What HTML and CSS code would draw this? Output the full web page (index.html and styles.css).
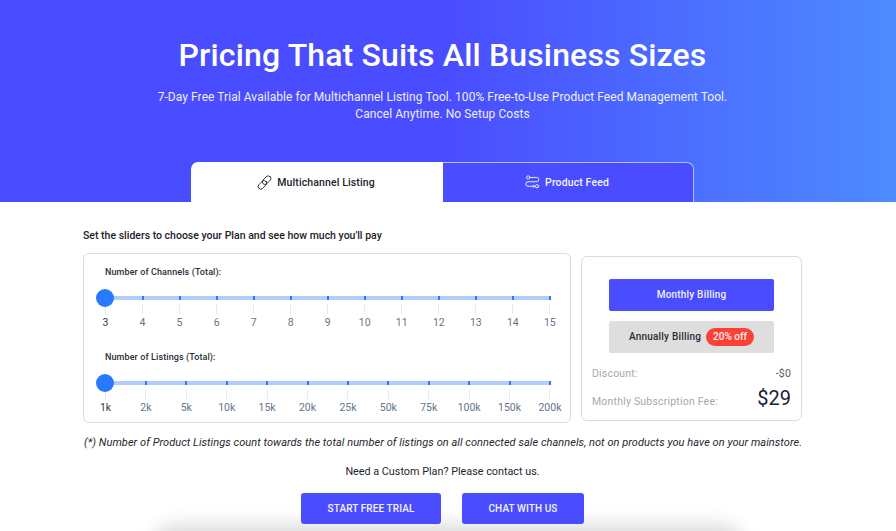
FILE: index.html
```html
<!DOCTYPE html>
<html lang="en">
<head>
    <meta charset="UTF-8">
    <title>Pricing</title>
    <link rel="stylesheet" href="styles.css">
</head>
<body>

    <header class="hero">
        <h1>Pricing That Suits All Business Sizes</h1>
        <p>7-Day Free Trial Available for Multichannel Listing Tool. 100% Free-to-Use Product Feed Management Tool.<br>Cancel Anytime. No Setup Costs</p>

        <div class="tabs">
            <div class="tab tab-active">
                <svg class="tab-icon" viewBox="0 0 16 16" fill="none" stroke="currentColor" stroke-width="0.9" stroke-linecap="round">
                    <rect x="7.4" y="0.2" width="5.6" height="10.6" rx="2.8" transform="rotate(45 10.2 5.5)"/>
                    <rect x="3" y="5.2" width="5.6" height="10.6" rx="2.8" transform="rotate(45 5.8 10.5)"/>
                </svg>
                Multichannel Listing
            </div>
            <div class="tab tab-feed">
                <svg class="tab-icon" viewBox="0 0 16 16" fill="none" stroke="currentColor" stroke-width="1" stroke-linecap="round" stroke-linejoin="round">
                    <circle cx="3.4" cy="2.6" r="1.7"/>
                    <path d="M5.1 2.6h7.3a2.3 2.3 0 0 1 0 4.6H3.2a2.4 2.4 0 0 0 0 4.8h7"/>
                    <path d="M8.8 10.6l1.4 1.4l-1.4 1.4"/>
                    <circle cx="12.8" cy="12" r="1.7"/>
                </svg>
                Product Feed
            </div>
        </div>
    </header>

    <main class="content">
        <h2 class="intro">Set the sliders to choose your Plan and see how much you'll pay</h2>

        <div class="plan-row">
            <section class="card sliders">
                <div class="slider-label">Number of Channels (Total):</div>
                <div class="slider">
                    <div class="track"></div>
                    <div class="thumb"></div>
                    <div class="stops">
                        <div class="stop stop-on"><i></i><b></b><span>3</span></div>
                        <div class="stop"><i></i><b></b><span>4</span></div>
                        <div class="stop"><i></i><b></b><span>5</span></div>
                        <div class="stop"><i></i><b></b><span>6</span></div>
                        <div class="stop"><i></i><b></b><span>7</span></div>
                        <div class="stop"><i></i><b></b><span>8</span></div>
                        <div class="stop"><i></i><b></b><span>9</span></div>
                        <div class="stop"><i></i><b></b><span>10</span></div>
                        <div class="stop"><i></i><b></b><span>11</span></div>
                        <div class="stop"><i></i><b></b><span>12</span></div>
                        <div class="stop"><i></i><b></b><span>13</span></div>
                        <div class="stop"><i></i><b></b><span>14</span></div>
                        <div class="stop"><i></i><b></b><span>15</span></div>
                    </div>
                </div>

                <div class="slider-label label-second">Number of Listings (Total):</div>
                <div class="slider">
                    <div class="track"></div>
                    <div class="thumb"></div>
                    <div class="stops">
                        <div class="stop stop-on"><i></i><b></b><span>1k</span></div>
                        <div class="stop"><i></i><b></b><span>2k</span></div>
                        <div class="stop"><i></i><b></b><span>5k</span></div>
                        <div class="stop"><i></i><b></b><span>10k</span></div>
                        <div class="stop"><i></i><b></b><span>15k</span></div>
                        <div class="stop"><i></i><b></b><span>20k</span></div>
                        <div class="stop"><i></i><b></b><span>25k</span></div>
                        <div class="stop"><i></i><b></b><span>50k</span></div>
                        <div class="stop"><i></i><b></b><span>75k</span></div>
                        <div class="stop"><i></i><b></b><span>100k</span></div>
                        <div class="stop"><i></i><b></b><span>150k</span></div>
                        <div class="stop"><i></i><b></b><span>200k</span></div>
                    </div>
                </div>
            </section>

            <aside class="card billing">
                <div class="bill-btn bill-monthly">Monthly Billing</div>
                <div class="bill-btn bill-annual">Annually Billing <span class="off">20% off</span></div>
                <div class="fee-row discount"><span>Discount:</span><span>-$0</span></div>
                <div class="fee-row total"><span>Monthly Subscription Fee:</span><strong>$29</strong></div>
            </aside>
        </div>

        <p class="note">(*) Number of Product Listings count towards the total number of listings on all connected sale channels, not on products you have on your mainstore.</p>
        <p class="custom">Need a Custom Plan? Please contact us.</p>

        <div class="actions">
            <a class="action action-trial">START FREE TRIAL</a>
            <a class="action action-chat">CHAT WITH US</a>
        </div>
    </main>

    <div class="bottom-shadow"></div>

</body>
</html>
```

FILE: styles.css
```css
/* Global */
html, body {
    height: 531px;
    overflow: hidden;
}

body {
    font-family: 'Roboto', sans-serif;
    background-color: #ffffff;
    margin: 0;
    padding: 0;
    color: #1d1d2b;
    position: relative;
}

/* Hero */
.hero {
    height: 202px;
    box-sizing: border-box;
    padding: 36px 11px 0 0;
    background: linear-gradient(90deg, #4a4dff 0%, #4a4dff 50%, #4d8bff 100%);
    color: #ffffff;
    text-align: center;
    display: flex;
    flex-direction: column;
    align-items: center;
}

.hero h1 {
    margin: 0;
    font-size: 32px;
    line-height: 38px;
    font-weight: 500;
    letter-spacing: 0.15px;
}

.hero p {
    margin: 15px 0 0;
    font-size: 12px;
    line-height: 17px;
    letter-spacing: 0.06px;
    color: #eef0ff;
}

/* Tabs */
.tabs {
    display: flex;
    margin-top: auto;
    width: 503px;
}

.tab {
    height: 40px;
    padding-right: 2px;
    display: flex;
    align-items: center;
    justify-content: center;
    gap: 5px;
    font-size: 10.5px;
    font-weight: 500;
    letter-spacing: 0.12px;
    box-sizing: border-box;
}

.tab-active {
    width: 252px;
    background-color: #ffffff;
    color: #1d1d2b;
    border-radius: 7px 0 0 0;
}

.tab-feed {
    width: 251px;
    background-color: #4a4dff;
    color: #f2f3ff;
    border: 1px solid #b9bcff;
    border-bottom: none;
    border-left: none;
    border-radius: 0 7px 0 0;
}

.tab-icon {
    width: 15px;
    height: 15px;
}

/* Content */
.content {
    width: 719px;
    margin: 0 0 0 83px;
}

.intro {
    margin: 27px 0 0;
    font-size: 10.5px;
    line-height: 13px;
    font-weight: 500;
    color: #1d1d2b;
}

.plan-row {
    display: flex;
    align-items: center;
    gap: 10px;
    margin-top: 11px;
}

.card {
    background-color: #ffffff;
    border: 1px solid #dcdcdc;
    border-radius: 6px;
    box-sizing: border-box;
}

/* Sliders */
.sliders {
    width: 488px;
    height: 170px;
    padding: 13px 10px 0 12px;
}

.slider-label {
    margin-left: 9px;
    font-size: 9px;
    line-height: 11px;
    font-weight: 500;
    letter-spacing: 0.1px;
    color: #2b2f3a;
}

.label-second {
    margin-top: 19px;
}

.slider {
    position: relative;
    margin: 11px 10px 0 9.5px;
    height: 44px;
}

.track {
    height: 4px;
    position: absolute;
    left: 0;
    right: 0;
    top: 7px;
    background-color: #b3cdfb;
}

.thumb {
    position: absolute;
    left: -9.5px;
    top: 0;
    width: 18px;
    height: 18px;
    border-radius: 50%;
    background-color: #2979ff;
    z-index: 1;
}

.stops {
    position: relative;
    display: flex;
    justify-content: space-between;
}

.stop {
    width: 0;
    display: flex;
    flex-direction: column;
    align-items: center;
    padding-top: 7px;
}

.stop i {
    flex: none;
    width: 2px;
    height: 4px;
    background-color: #2979ff;
}

.stop b {
    flex: none;
    width: 1px;
    height: 9px;
    margin-top: 5px;
    background-color: #e6e8ec;
}

.stop span {
    flex: none;
    margin-top: 1.5px;
    font-size: 10.5px;
    line-height: 13px;
    color: #64748b;
    white-space: nowrap;
}

.stop-on span {
    color: #333a47;
}

/* Billing */
.billing {
    width: 221px;
    height: 165px;
    padding: 22px 10px 0 10px;
}

.bill-btn {
    width: 165px;
    height: 32px;
    margin: 0 0 0 17px;
    border-radius: 2px;
    display: flex;
    align-items: center;
    justify-content: center;
    font-size: 10px;
    font-weight: 500;
    letter-spacing: 0.2px;
}

.bill-monthly {
    background-color: #4a4dff;
    color: #f0f1ff;
}

.bill-annual {
    background-color: #dedede;
    color: #2b2b33;
    margin-top: 10px;
    gap: 5px;
}

.off {
    background-color: #fb4237;
    color: #ffeeee;
    border-radius: 9px;
    padding: 0 7px;
    height: 18px;
    line-height: 18px;
    letter-spacing: 0;
}

.fee-row {
    display: flex;
    justify-content: space-between;
    font-size: 10.5px;
    letter-spacing: 0.2px;
    color: #a6a9b0;
}

.discount {
    margin-top: 15px;
    height: 12px;
    line-height: 12px;
}

.discount span:last-child {
    color: #555a66;
}

.total {
    margin-top: 6px;
    height: 25px;
    align-items: flex-end;
}

.total span {
    margin-bottom: 3px;
}

.total strong {
    font-size: 20px;
    line-height: 25px;
    font-weight: 400;
    letter-spacing: 0;
    color: #1a2238;
}

/* Footer part */
.note {
    margin: 13px 0 0 1px;
    font-size: 11px;
    line-height: 14px;
    font-style: italic;
    letter-spacing: 0.05px;
    color: #26262e;
    white-space: nowrap;
}

.custom {
    margin: 15px 0 0;
    font-size: 10.8px;
    line-height: 14px;
    text-align: center;
    color: #26262e;
}

.actions {
    display: flex;
    justify-content: center;
    gap: 21px;
    margin-top: 14px;
    position: relative;
    z-index: 1;
}

.action {
    height: 31px;
    border-radius: 3px;
    display: flex;
    align-items: center;
    justify-content: center;
    background-color: #4a4dff;
    color: #f4f4ff;
    font-size: 10px;
    font-weight: 500;
    letter-spacing: 0.1px;
}

.action-trial {
    width: 140px;
}

.action-chat {
    width: 122px;
}

/* Shadow of the section below the fold, clipped at the window edge */
.bottom-shadow {
    position: absolute;
    left: 0;
    right: 0;
    bottom: 0;
    height: 40px;
    overflow: hidden;
}

.bottom-shadow::before {
    content: "";
    position: absolute;
    left: 160px;
    right: 160px;
    top: 41px;
    height: 30px;
    border-radius: 14px;
    box-shadow: 0 0 20px 6px rgba(0, 0, 0, 0.16);
}
```
